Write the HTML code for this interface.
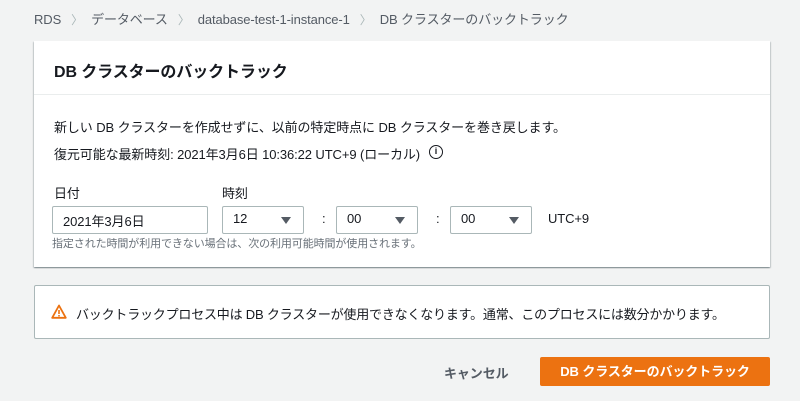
<!DOCTYPE html>
<html><head><meta charset="utf-8"><style>
*{box-sizing:border-box;margin:0;padding:0}
body{width:800px;height:401px;background:#f2f3f3;font-family:"Liberation Sans","Noto Sans CJK JP",sans-serif;color:#16191f;position:relative;overflow:hidden;font-size:13px;letter-spacing:-0.1px}
.abs{position:absolute;white-space:nowrap}
.bc{top:9px;left:34px;font-size:13px;color:#545b64}
.bc span.s{color:#aab7b8;margin:0 8px 0 10px;font-size:12px}
.card{position:absolute;left:34px;top:41px;width:736px;height:226px;background:#fff;box-shadow:0 1px 1px 0 rgba(0,28,36,.3),1px 1px 1px 0 rgba(0,28,36,.15),-1px 1px 1px 0 rgba(0,28,36,.15)}
.hd{height:54px;border-bottom:1px solid #eaeded;padding:17px 20px;font-size:16px;font-weight:bold}
.in{position:absolute;top:206px;height:28px;border:1px solid #aab7b8;border-radius:2px;background:#fff;padding:4px 10px;font-size:13px}
.tri{position:absolute;right:12px;top:10px;width:0;height:0;border-left:5px solid transparent;border-right:5px solid transparent;border-top:7px solid #545b64}
.warn{position:absolute;left:34px;top:285px;width:736px;height:54px;background:#fff;border:1px solid #aab7b8;border-radius:2px}
.btn{position:absolute;left:540px;top:357px;width:230px;height:29px;background:#ec7211;color:#fff;font-weight:bold;text-align:center;line-height:29px;border-radius:2px;font-size:13px}
</style></head><body>
<div class="abs bc">RDS<span class="s">〉</span>データベース<span class="s">〉</span>database-test-1-instance-1<span class="s">〉</span>DB クラスターのバックトラック</div>
<div class="card"><div class="hd">DB クラスターのバックトラック</div></div>
<div class="abs" style="left:54px;top:117px">新しい DB クラスターを作成せずに、以前の特定時点に DB クラスターを巻き戻します。</div>
<div class="abs" style="left:54px;top:144px">復元可能な最新時刻: 2021年3月6日 10:36:22 UTC+9 (ローカル)</div>
<div class="abs" style="left:429px;top:145px;width:14px;height:14px;border:1.5px solid #16191f;border-radius:50%;font-size:9px;font-weight:bold;text-align:center;line-height:11px">i</div>
<div class="abs" style="left:54px;top:183px">日付</div>
<div class="abs" style="left:222px;top:183px">時刻</div>
<div class="in" style="left:52px;width:156px">2021年3月6日</div>
<div class="in" style="left:222px;width:82px">12<div class="tri"></div></div>
<div class="abs" style="left:322px;top:211px">:</div>
<div class="in" style="left:336px;width:82px">00<div class="tri"></div></div>
<div class="abs" style="left:436px;top:211px">:</div>
<div class="in" style="left:450px;width:82px">00<div class="tri"></div></div>
<div class="abs" style="left:548px;top:211px">UTC+9</div>
<div class="abs" style="left:52px;top:235px;font-size:11px;color:#687078">指定された時間が利用できない場合は、次の利用可能時間が使用されます。</div>
<div class="warn"></div>
<svg class="abs" style="left:51px;top:304px" width="16" height="15" viewBox="0 0 16 15"><path d="M8 1.5L1.2 13.8H14.8Z" fill="none" stroke="#ec7211" stroke-width="1.8" stroke-linejoin="round"/><rect x="7.2" y="6" width="1.6" height="4" fill="#ec7211"/><rect x="7.2" y="11" width="1.6" height="1.5" fill="#ec7211"/></svg>
<div class="abs" style="left:76px;top:304px;letter-spacing:-0.2px">バックトラックプロセス中は DB クラスターが使用できなくなります。通常、このプロセスには数分かかります。</div>
<div class="abs" style="left:444px;top:363px;font-weight:bold;color:#545b64">キャンセル</div>
<div class="btn">DB クラスターのバックトラック</div>
</body></html>
